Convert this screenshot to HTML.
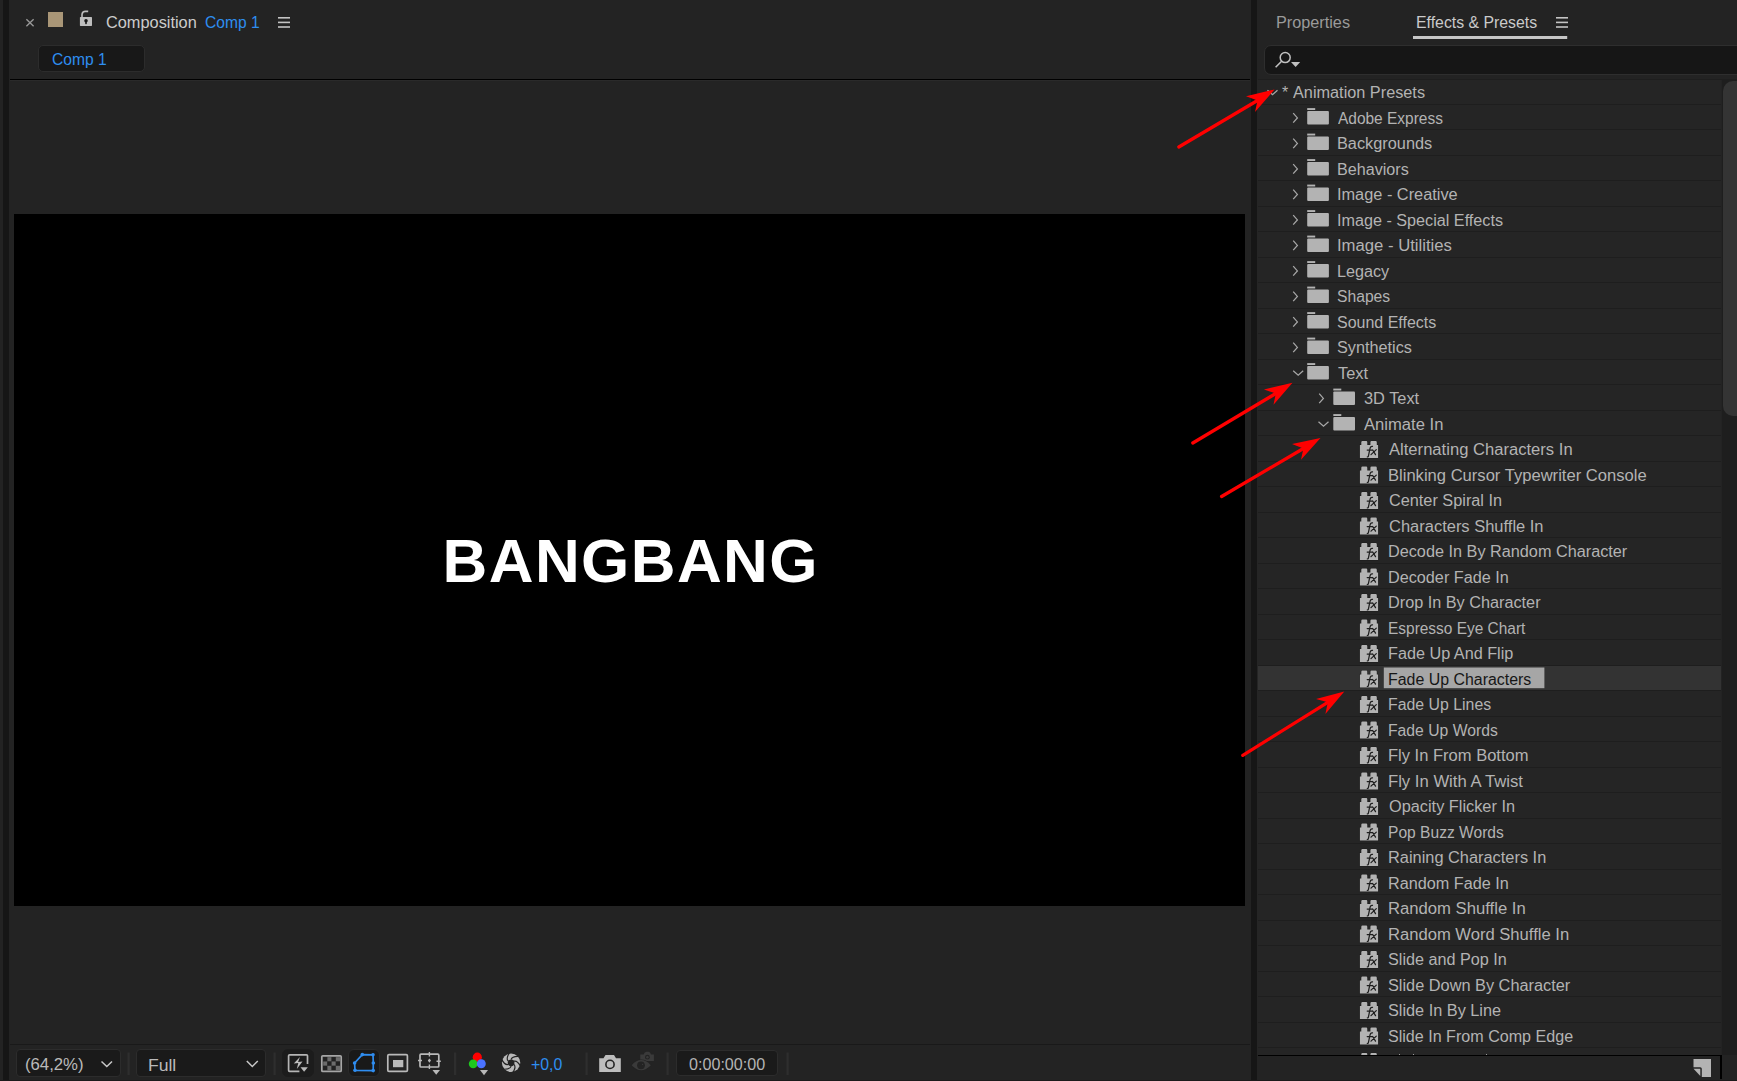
<!DOCTYPE html><html><head><meta charset="utf-8"><style>
*{margin:0;padding:0;box-sizing:border-box}
html,body{width:1737px;height:1081px;overflow:hidden;background:#232323}
body{position:relative;font-family:'Liberation Sans',sans-serif}
.a{position:absolute}
.t{position:absolute;white-space:pre;font-family:'Liberation Sans',sans-serif;font-size:16px;line-height:normal}
</style></head><body>
<div class="a" style="left:3px;top:0;width:6px;height:1081px;background:#161616"></div>
<div class="a" style="left:1251px;top:0;width:6px;height:1081px;background:#161616"></div>
<div class="a" style="left:0;top:1080px;width:1737px;height:1px;background:#1b1b1b"></div>
<svg class="a" style="left:0;top:0" width="300" height="80"><path d="M26.4 19.2 L33.6 26.2 M33.6 19.2 L26.4 26.2" stroke="#999999" stroke-width="1.35"/><rect x="48" y="12" width="15" height="15" fill="#a99677"/><path d="M82 17.5 V14.5 Q82.2 11.3 85.6 11.2 L88.2 11.4" stroke="#bdbdbd" stroke-width="1.6" fill="none"/><rect x="79.9" y="17.1" width="12.1" height="8.8" rx="0.6" fill="#bdbdbd"/><circle cx="86" cy="20.7" r="1.75" fill="#141414"/><rect x="85.2" y="21" width="1.6" height="3.3" rx="0.7" fill="#141414"/><rect x="278" y="17" width="12" height="1.6" fill="#c4c4c4"/><rect x="278" y="21.6" width="12" height="1.6" fill="#c4c4c4"/><rect x="278" y="26.2" width="12" height="1.6" fill="#c4c4c4"/></svg>
<div class="t" style="left:106.30px;top:14.20px;color:#cccccc;transform:scaleX(1.0205);transform-origin:0px 0;">Composition</div>
<div class="t" style="left:205.40px;top:14.20px;color:#2e8ef0;transform:scaleX(0.9750);transform-origin:0px 0;">Comp 1</div>
<div class="a" style="left:37.5px;top:45px;width:107px;height:27px;background:#181818;border:1.3px solid #2c2c2c;border-radius:5px"></div>
<div class="t" style="left:52.20px;top:51.10px;color:#2e8ef0;transform:scaleX(0.9768);transform-origin:0px 0;">Comp 1</div>
<div class="a" style="left:10px;top:79px;width:1240px;height:1px;background:#000"></div>
<div class="a" style="left:10px;top:80px;width:1240px;height:1px;background:#2a2a2a"></div>
<div class="a" style="left:14px;top:214px;width:1231px;height:692px;background:#000"></div>
<div class="t" style="left:442.6px;top:525.2px;color:#fff;font-weight:bold;font-size:62px;letter-spacing:1.4px">BANGBANG</div>
<div class="a" style="left:10px;top:1044px;width:1240px;height:1px;background:#191919"></div>
<div class="a" style="left:16px;top:1049px;width:105px;height:28px;background:#1a1a1a;border:1px solid #2c2c2c;border-radius:4px"></div>
<div class="t" style="left:25.30px;top:1056.20px;color:#bababa;transform:scaleX(1.0455);transform-origin:1px 0;">(64,2%)</div>
<div class="a" style="left:136px;top:1049px;width:130px;height:28px;background:#1a1a1a;border:1px solid #2c2c2c;border-radius:4px"></div>
<div class="t" style="left:147.60px;top:1057.10px;color:#bababa;transform:scaleX(1.1000);transform-origin:1px 0;">Full</div>
<div class="a" style="left:282px;top:1049px;width:32px;height:28px;background:#1c1c1c;border:1px solid #1c1c1c;border-radius:6px"></div>
<div class="a" style="left:348px;top:1049px;width:32px;height:28px;background:#191919;border:1px solid #2a2a2a;border-radius:6px"></div>
<div class="a" style="left:675.6px;top:1049.6px;width:102.60000000000002px;height:26.600000000000136px;background:#1a1a1a;border:1px solid #2c2c2c;border-radius:4px"></div>
<div class="t" style="left:688.70px;top:1055.60px;color:#b4b4b4;transform:scaleX(1.0080);transform-origin:0px 0;">0:00:00:00</div>
<div class="t" style="left:530.50px;top:1056.20px;color:#2e8ef0;transform:scaleX(0.9903);transform-origin:0px 0;">+0,0</div>
<svg class="a" style="left:0;top:1040px" width="800" height="41"><g transform="translate(0,-1040)"><rect x="127.5" y="1052.5" width="2.2" height="22.5" fill="#2e2e2e"/><rect x="273.5" y="1052.5" width="2.2" height="22.5" fill="#2e2e2e"/><rect x="454" y="1052.5" width="2.2" height="22.5" fill="#2e2e2e"/><rect x="585.5" y="1052.5" width="2.2" height="22.5" fill="#2e2e2e"/><rect x="666.5" y="1052.5" width="2.2" height="22.5" fill="#2e2e2e"/><rect x="786.5" y="1052.5" width="2.2" height="22.5" fill="#2e2e2e"/><path d="M101.5 1061.5 L106.8 1066.5 L112 1061.5" stroke="#c8c8c8" stroke-width="1.5" fill="none"/><path d="M246.8 1061 L252.3 1066.5 L257.8 1061" stroke="#c8c8c8" stroke-width="1.5" fill="none"/><path d="M299.4 1071.3 H289.6 Q288.6 1071.3 288.6 1070.3 V1055.8 Q288.6 1054.8 289.6 1054.8 H306.5 Q307.5 1054.8 307.5 1055.8 V1064" stroke="#b5b5b5" stroke-width="1.7" fill="none"/><path d="M299.9 1057 L293.8 1063.6 L298.3 1063 L296.8 1068.9 L302.5 1061.5 L298.1 1062.1 Z" fill="#bdbdbd"/><path d="M300.5 1067.2 H307.8 L304.1 1071.8 Z" fill="#bababa"/><rect x="321.8" y="1055.8" width="19.4" height="15.6" rx="1" stroke="#a6a6a6" stroke-width="1.7" fill="#2a2a2a"/><rect x="323.2" y="1057.2" width="4.2" height="4.3" fill="#222222"/><rect x="323.2" y="1061.5" width="4.2" height="4.3" fill="#6c6c6c"/><rect x="323.2" y="1065.8" width="4.2" height="4.3" fill="#222222"/><rect x="327.4" y="1057.2" width="4.2" height="4.3" fill="#6c6c6c"/><rect x="327.4" y="1061.5" width="4.2" height="4.3" fill="#222222"/><rect x="327.4" y="1065.8" width="4.2" height="4.3" fill="#6c6c6c"/><rect x="331.6" y="1057.2" width="4.2" height="4.3" fill="#222222"/><rect x="331.6" y="1061.5" width="4.2" height="4.3" fill="#6c6c6c"/><rect x="331.6" y="1065.8" width="4.2" height="4.3" fill="#222222"/><rect x="335.8" y="1057.2" width="4.2" height="4.3" fill="#6c6c6c"/><rect x="335.8" y="1061.5" width="4.2" height="4.3" fill="#222222"/><rect x="335.8" y="1065.8" width="4.2" height="4.3" fill="#6c6c6c"/><path d="M362.3 1054.6 L373 1054.8 L373.3 1063 L373.2 1070.6 L355 1070.3 L354.6 1063 Z" stroke="#2f8df0" stroke-width="1.7" fill="none"/><circle cx="362.3" cy="1054.6" r="1.8" fill="#2f8df0"/><circle cx="373" cy="1054.8" r="1.8" fill="#2f8df0"/><circle cx="373.3" cy="1063" r="1.8" fill="#2f8df0"/><circle cx="373.2" cy="1070.6" r="1.8" fill="#2f8df0"/><circle cx="355" cy="1070.3" r="1.8" fill="#2f8df0"/><circle cx="354.6" cy="1063" r="1.8" fill="#2f8df0"/><rect x="387.8" y="1054.6" width="19.6" height="16.8" rx="1.2" stroke="#b9b9b9" stroke-width="1.7" fill="none"/><rect x="393" y="1060" width="10.3" height="7.2" fill="#b9b9b9"/><rect x="420" y="1054.2" width="18.8" height="12.8" rx="1" stroke="#b9b9b9" stroke-width="1.7" fill="none"/><path d="M429.4 1052 V1056.5 M429.4 1064.5 V1069 M418 1060.5 H422 M436.5 1061.2 H440.8" stroke="#b9b9b9" stroke-width="1.4"/><path d="M429.4 1058.5 L431 1060.6 L429.4 1062.7 L427.8 1060.6 Z" fill="#b9b9b9"/><path d="M432.5 1070 H440 L436.2 1074.8 Z" fill="#b9b9b9"/><circle cx="477.3" cy="1057.2" r="4.6" fill="#ff0000"/><circle cx="473.2" cy="1063.8" r="4.4" fill="#1ec81e"/><circle cx="481.3" cy="1063.8" r="4.5" fill="#4a72ff"/><path d="M480 1070 H488 L484 1075.2 Z" fill="#b9b9b9"/><g transform="translate(511.1,1062.8)"><circle r="9.2" fill="#b9b9b9"/><circle r="3.4" fill="#232323"/><path d="M0.00 -3.30 Q0.95 -6.73 7.66 -6.43" stroke="#232323" stroke-width="1.2" fill="none"/><path d="M2.86 -1.65 Q6.30 -2.55 9.40 3.42" stroke="#232323" stroke-width="1.2" fill="none"/><path d="M2.86 1.65 Q5.36 4.19 1.74 9.85" stroke="#232323" stroke-width="1.2" fill="none"/><path d="M0.00 3.30 Q-0.95 6.73 -7.66 6.43" stroke="#232323" stroke-width="1.2" fill="none"/><path d="M-2.86 1.65 Q-6.30 2.55 -9.40 -3.42" stroke="#232323" stroke-width="1.2" fill="none"/><path d="M-2.86 -1.65 Q-5.36 -4.19 -1.74 -9.85" stroke="#232323" stroke-width="1.2" fill="none"/></g><path d="M599.2 1058.2 H603.5 L605.5 1055 H614 L616 1058.2 H620.8 V1072 H599.2 Z" fill="#bdbdbd"/><circle cx="610" cy="1064.4" r="4.1" fill="none" stroke="#232323" stroke-width="1.6"/><path d="M640.3 1054.4 H643.6 Q644.5 1051.7 646.5 1051.7 H648.5 Q650.4 1051.7 651 1054.4 H653.9 V1060.9 H640.3 Z" fill="#3a3a3a"/><circle cx="647.4" cy="1057.2" r="2.4" fill="#232323"/><circle cx="647.4" cy="1057.2" r="1.2" fill="#3a3a3a"/><path d="M631.7 1065.2 Q641.2 1055 650.8 1065.2 Q641.2 1075.4 631.7 1065.2 Z" fill="#3a3a3a" stroke="#232323" stroke-width="1.4" paint-order="stroke"/><circle cx="641" cy="1065.3" r="3.9" fill="#232323"/><circle cx="642.6" cy="1064.4" r="0.6" fill="#3a3a3a"/></g></svg>
<div class="t" style="left:1275.50px;top:14.20px;color:#9a9a9a;transform:scaleX(1.0153);transform-origin:1px 0;">Properties</div>
<div class="t" style="left:1415.70px;top:14.20px;color:#cacaca;transform:scaleX(0.9893);transform-origin:1px 0;">Effects &amp; Presets</div>
<svg class="a" style="left:1250px;top:0" width="487" height="80"><g transform="translate(-1250,0)"><rect x="1556" y="17" width="12" height="1.6" fill="#c4c4c4"/><rect x="1556" y="21.6" width="12" height="1.6" fill="#c4c4c4"/><rect x="1556" y="26.2" width="12" height="1.6" fill="#c4c4c4"/><rect x="1413" y="36" width="154.2" height="3" fill="#c6c6c6"/></g></svg>
<div class="a" style="left:1264.3px;top:45px;width:490px;height:29.8px;background:#161616;border:1.3px solid #2e2e2e;border-radius:7px"></div>
<svg class="a" style="left:1270px;top:48px" width="40" height="24"><g transform="translate(-1270,-48)"><circle cx="1285.2" cy="57.6" r="5" stroke="#c0c0c0" stroke-width="1.5" fill="none"/><path d="M1281.6 61.2 L1275.6 67.2" stroke="#c0c0c0" stroke-width="1.6"/><path d="M1291 62 H1300.2 L1295.6 66.9 Z" fill="#c0c0c0"/></g></svg>
<div class="a" style="left:1258px;top:79px;width:479px;height:1px;background:#1e1e1e"></div>
<div class="a" style="left:1257px;top:80px;width:464px;height:975px;overflow:hidden;background:#252525">
<svg class="a" style="left:0;top:0" width="464" height="975"><g transform="translate(-1257,-80)"><path d="M1267.5 90.2 L1272.5 94.6 L1277.5 90.2" stroke="#a8a8a8" stroke-width="1.25" fill="none"/><rect x="1258" y="104" width="463" height="1" fill="#1e1e1e"/><path d="M1293.2 113.1 L1297.4 117.9 L1293.2 122.7" stroke="#a8a8a8" stroke-width="1.25" fill="none"/><rect x="1307.2" y="108.1" width="8" height="1.9" fill="#b3b3b3"/><rect x="1307.2" y="111.0" width="21.7" height="13.6" rx="1" fill="#b3b3b3"/><rect x="1258" y="129" width="463" height="1" fill="#1e1e1e"/><path d="M1293.2 138.6 L1297.4 143.4 L1293.2 148.2" stroke="#a8a8a8" stroke-width="1.25" fill="none"/><rect x="1307.2" y="133.6" width="8" height="1.9" fill="#b3b3b3"/><rect x="1307.2" y="136.5" width="21.7" height="13.6" rx="1" fill="#b3b3b3"/><rect x="1258" y="155" width="463" height="1" fill="#1e1e1e"/><path d="M1293.2 164.1 L1297.4 168.9 L1293.2 173.7" stroke="#a8a8a8" stroke-width="1.25" fill="none"/><rect x="1307.2" y="159.1" width="8" height="1.9" fill="#b3b3b3"/><rect x="1307.2" y="162.0" width="21.7" height="13.6" rx="1" fill="#b3b3b3"/><rect x="1258" y="180" width="463" height="1" fill="#1e1e1e"/><path d="M1293.2 189.6 L1297.4 194.4 L1293.2 199.2" stroke="#a8a8a8" stroke-width="1.25" fill="none"/><rect x="1307.2" y="184.6" width="8" height="1.9" fill="#b3b3b3"/><rect x="1307.2" y="187.5" width="21.7" height="13.6" rx="1" fill="#b3b3b3"/><rect x="1258" y="206" width="463" height="1" fill="#1e1e1e"/><path d="M1293.2 215.1 L1297.4 219.9 L1293.2 224.7" stroke="#a8a8a8" stroke-width="1.25" fill="none"/><rect x="1307.2" y="210.1" width="8" height="1.9" fill="#b3b3b3"/><rect x="1307.2" y="213.0" width="21.7" height="13.6" rx="1" fill="#b3b3b3"/><rect x="1258" y="231" width="463" height="1" fill="#1e1e1e"/><path d="M1293.2 240.6 L1297.4 245.4 L1293.2 250.2" stroke="#a8a8a8" stroke-width="1.25" fill="none"/><rect x="1307.2" y="235.6" width="8" height="1.9" fill="#b3b3b3"/><rect x="1307.2" y="238.5" width="21.7" height="13.6" rx="1" fill="#b3b3b3"/><rect x="1258" y="257" width="463" height="1" fill="#1e1e1e"/><path d="M1293.2 266.1 L1297.4 270.9 L1293.2 275.7" stroke="#a8a8a8" stroke-width="1.25" fill="none"/><rect x="1307.2" y="261.1" width="8" height="1.9" fill="#b3b3b3"/><rect x="1307.2" y="264.0" width="21.7" height="13.6" rx="1" fill="#b3b3b3"/><rect x="1258" y="282" width="463" height="1" fill="#1e1e1e"/><path d="M1293.2 291.6 L1297.4 296.4 L1293.2 301.2" stroke="#a8a8a8" stroke-width="1.25" fill="none"/><rect x="1307.2" y="286.6" width="8" height="1.9" fill="#b3b3b3"/><rect x="1307.2" y="289.5" width="21.7" height="13.6" rx="1" fill="#b3b3b3"/><rect x="1258" y="308" width="463" height="1" fill="#1e1e1e"/><path d="M1293.2 317.1 L1297.4 321.9 L1293.2 326.7" stroke="#a8a8a8" stroke-width="1.25" fill="none"/><rect x="1307.2" y="312.1" width="8" height="1.9" fill="#b3b3b3"/><rect x="1307.2" y="315.0" width="21.7" height="13.6" rx="1" fill="#b3b3b3"/><rect x="1258" y="333" width="463" height="1" fill="#1e1e1e"/><path d="M1293.2 342.6 L1297.4 347.4 L1293.2 352.2" stroke="#a8a8a8" stroke-width="1.25" fill="none"/><rect x="1307.2" y="337.6" width="8" height="1.9" fill="#b3b3b3"/><rect x="1307.2" y="340.5" width="21.7" height="13.6" rx="1" fill="#b3b3b3"/><rect x="1258" y="359" width="463" height="1" fill="#1e1e1e"/><path d="M1293.2 370.7 L1298.2 375.1 L1303.2 370.7" stroke="#a8a8a8" stroke-width="1.25" fill="none"/><rect x="1307.2" y="363.1" width="8" height="1.9" fill="#b3b3b3"/><rect x="1307.2" y="366.0" width="21.7" height="13.6" rx="1" fill="#b3b3b3"/><rect x="1258" y="384" width="463" height="1" fill="#1e1e1e"/><path d="M1319.2 393.6 L1323.4 398.4 L1319.2 403.2" stroke="#a8a8a8" stroke-width="1.25" fill="none"/><rect x="1333.3" y="388.6" width="8" height="1.9" fill="#b3b3b3"/><rect x="1333.3" y="391.5" width="21.7" height="13.6" rx="1" fill="#b3b3b3"/><rect x="1258" y="410" width="463" height="1" fill="#1e1e1e"/><path d="M1318.5 421.7 L1323.5 426.1 L1328.5 421.7" stroke="#a8a8a8" stroke-width="1.25" fill="none"/><rect x="1333.3" y="414.1" width="8" height="1.9" fill="#b3b3b3"/><rect x="1333.3" y="417.0" width="21.7" height="13.6" rx="1" fill="#b3b3b3"/><rect x="1258" y="435" width="463" height="1" fill="#1e1e1e"/><path d="M1359.9 444.9 H1361.3 V442.2 Q1361.3 441.1 1362.4 441.1 H1366.2 Q1367.3 441.1 1367.3 442.2 V444.9 H1370.4 V442.2 Q1370.4 441.1 1371.5 441.1 H1375.7 Q1376.8 441.1 1376.8 442.2 V444.9 H1378.1 V458.0 H1359.9 Z" fill="#b3b3b3" stroke="#1c1c1c" stroke-width="1" paint-order="stroke"/><path transform="translate(1359.9,436.0)" d="M12.6 10.4 Q10.7 9.9 10 12.8 L8.5 20.2 Q8.2 21 7.4 20.8 M7.3 14.1 H12.3 M11.1 18.6 L16.4 13.6 M12.8 14 L15.6 18.6" stroke="#1e1e1e" stroke-width="1.25" fill="none" stroke-linecap="round"/><rect x="1258" y="461" width="463" height="1" fill="#1e1e1e"/><path d="M1359.9 470.4 H1361.3 V467.7 Q1361.3 466.6 1362.4 466.6 H1366.2 Q1367.3 466.6 1367.3 467.7 V470.4 H1370.4 V467.7 Q1370.4 466.6 1371.5 466.6 H1375.7 Q1376.8 466.6 1376.8 467.7 V470.4 H1378.1 V483.5 H1359.9 Z" fill="#b3b3b3" stroke="#1c1c1c" stroke-width="1" paint-order="stroke"/><path transform="translate(1359.9,461.5)" d="M12.6 10.4 Q10.7 9.9 10 12.8 L8.5 20.2 Q8.2 21 7.4 20.8 M7.3 14.1 H12.3 M11.1 18.6 L16.4 13.6 M12.8 14 L15.6 18.6" stroke="#1e1e1e" stroke-width="1.25" fill="none" stroke-linecap="round"/><rect x="1258" y="486" width="463" height="1" fill="#1e1e1e"/><path d="M1359.9 495.9 H1361.3 V493.2 Q1361.3 492.1 1362.4 492.1 H1366.2 Q1367.3 492.1 1367.3 493.2 V495.9 H1370.4 V493.2 Q1370.4 492.1 1371.5 492.1 H1375.7 Q1376.8 492.1 1376.8 493.2 V495.9 H1378.1 V509.0 H1359.9 Z" fill="#b3b3b3" stroke="#1c1c1c" stroke-width="1" paint-order="stroke"/><path transform="translate(1359.9,487.0)" d="M12.6 10.4 Q10.7 9.9 10 12.8 L8.5 20.2 Q8.2 21 7.4 20.8 M7.3 14.1 H12.3 M11.1 18.6 L16.4 13.6 M12.8 14 L15.6 18.6" stroke="#1e1e1e" stroke-width="1.25" fill="none" stroke-linecap="round"/><rect x="1258" y="512" width="463" height="1" fill="#1e1e1e"/><path d="M1359.9 521.4 H1361.3 V518.7 Q1361.3 517.6 1362.4 517.6 H1366.2 Q1367.3 517.6 1367.3 518.7 V521.4 H1370.4 V518.7 Q1370.4 517.6 1371.5 517.6 H1375.7 Q1376.8 517.6 1376.8 518.7 V521.4 H1378.1 V534.5 H1359.9 Z" fill="#b3b3b3" stroke="#1c1c1c" stroke-width="1" paint-order="stroke"/><path transform="translate(1359.9,512.5)" d="M12.6 10.4 Q10.7 9.9 10 12.8 L8.5 20.2 Q8.2 21 7.4 20.8 M7.3 14.1 H12.3 M11.1 18.6 L16.4 13.6 M12.8 14 L15.6 18.6" stroke="#1e1e1e" stroke-width="1.25" fill="none" stroke-linecap="round"/><rect x="1258" y="537" width="463" height="1" fill="#1e1e1e"/><path d="M1359.9 546.9 H1361.3 V544.2 Q1361.3 543.1 1362.4 543.1 H1366.2 Q1367.3 543.1 1367.3 544.2 V546.9 H1370.4 V544.2 Q1370.4 543.1 1371.5 543.1 H1375.7 Q1376.8 543.1 1376.8 544.2 V546.9 H1378.1 V560.0 H1359.9 Z" fill="#b3b3b3" stroke="#1c1c1c" stroke-width="1" paint-order="stroke"/><path transform="translate(1359.9,538.0)" d="M12.6 10.4 Q10.7 9.9 10 12.8 L8.5 20.2 Q8.2 21 7.4 20.8 M7.3 14.1 H12.3 M11.1 18.6 L16.4 13.6 M12.8 14 L15.6 18.6" stroke="#1e1e1e" stroke-width="1.25" fill="none" stroke-linecap="round"/><rect x="1258" y="563" width="463" height="1" fill="#1e1e1e"/><path d="M1359.9 572.4 H1361.3 V569.7 Q1361.3 568.6 1362.4 568.6 H1366.2 Q1367.3 568.6 1367.3 569.7 V572.4 H1370.4 V569.7 Q1370.4 568.6 1371.5 568.6 H1375.7 Q1376.8 568.6 1376.8 569.7 V572.4 H1378.1 V585.5 H1359.9 Z" fill="#b3b3b3" stroke="#1c1c1c" stroke-width="1" paint-order="stroke"/><path transform="translate(1359.9,563.5)" d="M12.6 10.4 Q10.7 9.9 10 12.8 L8.5 20.2 Q8.2 21 7.4 20.8 M7.3 14.1 H12.3 M11.1 18.6 L16.4 13.6 M12.8 14 L15.6 18.6" stroke="#1e1e1e" stroke-width="1.25" fill="none" stroke-linecap="round"/><rect x="1258" y="588" width="463" height="1" fill="#1e1e1e"/><path d="M1359.9 597.9 H1361.3 V595.2 Q1361.3 594.1 1362.4 594.1 H1366.2 Q1367.3 594.1 1367.3 595.2 V597.9 H1370.4 V595.2 Q1370.4 594.1 1371.5 594.1 H1375.7 Q1376.8 594.1 1376.8 595.2 V597.9 H1378.1 V611.0 H1359.9 Z" fill="#b3b3b3" stroke="#1c1c1c" stroke-width="1" paint-order="stroke"/><path transform="translate(1359.9,589.0)" d="M12.6 10.4 Q10.7 9.9 10 12.8 L8.5 20.2 Q8.2 21 7.4 20.8 M7.3 14.1 H12.3 M11.1 18.6 L16.4 13.6 M12.8 14 L15.6 18.6" stroke="#1e1e1e" stroke-width="1.25" fill="none" stroke-linecap="round"/><rect x="1258" y="614" width="463" height="1" fill="#1e1e1e"/><path d="M1359.9 623.4 H1361.3 V620.7 Q1361.3 619.6 1362.4 619.6 H1366.2 Q1367.3 619.6 1367.3 620.7 V623.4 H1370.4 V620.7 Q1370.4 619.6 1371.5 619.6 H1375.7 Q1376.8 619.6 1376.8 620.7 V623.4 H1378.1 V636.5 H1359.9 Z" fill="#b3b3b3" stroke="#1c1c1c" stroke-width="1" paint-order="stroke"/><path transform="translate(1359.9,614.5)" d="M12.6 10.4 Q10.7 9.9 10 12.8 L8.5 20.2 Q8.2 21 7.4 20.8 M7.3 14.1 H12.3 M11.1 18.6 L16.4 13.6 M12.8 14 L15.6 18.6" stroke="#1e1e1e" stroke-width="1.25" fill="none" stroke-linecap="round"/><rect x="1258" y="639" width="463" height="1" fill="#1e1e1e"/><path d="M1359.9 648.9 H1361.3 V646.2 Q1361.3 645.1 1362.4 645.1 H1366.2 Q1367.3 645.1 1367.3 646.2 V648.9 H1370.4 V646.2 Q1370.4 645.1 1371.5 645.1 H1375.7 Q1376.8 645.1 1376.8 646.2 V648.9 H1378.1 V662.0 H1359.9 Z" fill="#b3b3b3" stroke="#1c1c1c" stroke-width="1" paint-order="stroke"/><path transform="translate(1359.9,640.0)" d="M12.6 10.4 Q10.7 9.9 10 12.8 L8.5 20.2 Q8.2 21 7.4 20.8 M7.3 14.1 H12.3 M11.1 18.6 L16.4 13.6 M12.8 14 L15.6 18.6" stroke="#1e1e1e" stroke-width="1.25" fill="none" stroke-linecap="round"/><rect x="1258" y="665" width="463" height="1" fill="#1e1e1e"/><rect x="1258" y="666.0" width="463" height="25" fill="#333333"/><path d="M1359.9 674.4 H1361.3 V671.7 Q1361.3 670.6 1362.4 670.6 H1366.2 Q1367.3 670.6 1367.3 671.7 V674.4 H1370.4 V671.7 Q1370.4 670.6 1371.5 670.6 H1375.7 Q1376.8 670.6 1376.8 671.7 V674.4 H1378.1 V687.5 H1359.9 Z" fill="#b3b3b3" stroke="#1c1c1c" stroke-width="1" paint-order="stroke"/><path transform="translate(1359.9,665.5)" d="M12.6 10.4 Q10.7 9.9 10 12.8 L8.5 20.2 Q8.2 21 7.4 20.8 M7.3 14.1 H12.3 M11.1 18.6 L16.4 13.6 M12.8 14 L15.6 18.6" stroke="#1e1e1e" stroke-width="1.25" fill="none" stroke-linecap="round"/><rect x="1383.8" y="667.5" width="160.6" height="20.7" fill="#a6a6a6"/><rect x="1258" y="690" width="463" height="1" fill="#1e1e1e"/><path d="M1359.9 699.9 H1361.3 V697.2 Q1361.3 696.1 1362.4 696.1 H1366.2 Q1367.3 696.1 1367.3 697.2 V699.9 H1370.4 V697.2 Q1370.4 696.1 1371.5 696.1 H1375.7 Q1376.8 696.1 1376.8 697.2 V699.9 H1378.1 V713.0 H1359.9 Z" fill="#b3b3b3" stroke="#1c1c1c" stroke-width="1" paint-order="stroke"/><path transform="translate(1359.9,691.0)" d="M12.6 10.4 Q10.7 9.9 10 12.8 L8.5 20.2 Q8.2 21 7.4 20.8 M7.3 14.1 H12.3 M11.1 18.6 L16.4 13.6 M12.8 14 L15.6 18.6" stroke="#1e1e1e" stroke-width="1.25" fill="none" stroke-linecap="round"/><rect x="1258" y="716" width="463" height="1" fill="#1e1e1e"/><path d="M1359.9 725.4 H1361.3 V722.7 Q1361.3 721.6 1362.4 721.6 H1366.2 Q1367.3 721.6 1367.3 722.7 V725.4 H1370.4 V722.7 Q1370.4 721.6 1371.5 721.6 H1375.7 Q1376.8 721.6 1376.8 722.7 V725.4 H1378.1 V738.5 H1359.9 Z" fill="#b3b3b3" stroke="#1c1c1c" stroke-width="1" paint-order="stroke"/><path transform="translate(1359.9,716.5)" d="M12.6 10.4 Q10.7 9.9 10 12.8 L8.5 20.2 Q8.2 21 7.4 20.8 M7.3 14.1 H12.3 M11.1 18.6 L16.4 13.6 M12.8 14 L15.6 18.6" stroke="#1e1e1e" stroke-width="1.25" fill="none" stroke-linecap="round"/><rect x="1258" y="741" width="463" height="1" fill="#1e1e1e"/><path d="M1359.9 750.9 H1361.3 V748.2 Q1361.3 747.1 1362.4 747.1 H1366.2 Q1367.3 747.1 1367.3 748.2 V750.9 H1370.4 V748.2 Q1370.4 747.1 1371.5 747.1 H1375.7 Q1376.8 747.1 1376.8 748.2 V750.9 H1378.1 V764.0 H1359.9 Z" fill="#b3b3b3" stroke="#1c1c1c" stroke-width="1" paint-order="stroke"/><path transform="translate(1359.9,742.0)" d="M12.6 10.4 Q10.7 9.9 10 12.8 L8.5 20.2 Q8.2 21 7.4 20.8 M7.3 14.1 H12.3 M11.1 18.6 L16.4 13.6 M12.8 14 L15.6 18.6" stroke="#1e1e1e" stroke-width="1.25" fill="none" stroke-linecap="round"/><rect x="1258" y="767" width="463" height="1" fill="#1e1e1e"/><path d="M1359.9 776.4 H1361.3 V773.7 Q1361.3 772.6 1362.4 772.6 H1366.2 Q1367.3 772.6 1367.3 773.7 V776.4 H1370.4 V773.7 Q1370.4 772.6 1371.5 772.6 H1375.7 Q1376.8 772.6 1376.8 773.7 V776.4 H1378.1 V789.5 H1359.9 Z" fill="#b3b3b3" stroke="#1c1c1c" stroke-width="1" paint-order="stroke"/><path transform="translate(1359.9,767.5)" d="M12.6 10.4 Q10.7 9.9 10 12.8 L8.5 20.2 Q8.2 21 7.4 20.8 M7.3 14.1 H12.3 M11.1 18.6 L16.4 13.6 M12.8 14 L15.6 18.6" stroke="#1e1e1e" stroke-width="1.25" fill="none" stroke-linecap="round"/><rect x="1258" y="792" width="463" height="1" fill="#1e1e1e"/><path d="M1359.9 801.9 H1361.3 V799.2 Q1361.3 798.1 1362.4 798.1 H1366.2 Q1367.3 798.1 1367.3 799.2 V801.9 H1370.4 V799.2 Q1370.4 798.1 1371.5 798.1 H1375.7 Q1376.8 798.1 1376.8 799.2 V801.9 H1378.1 V815.0 H1359.9 Z" fill="#b3b3b3" stroke="#1c1c1c" stroke-width="1" paint-order="stroke"/><path transform="translate(1359.9,793.0)" d="M12.6 10.4 Q10.7 9.9 10 12.8 L8.5 20.2 Q8.2 21 7.4 20.8 M7.3 14.1 H12.3 M11.1 18.6 L16.4 13.6 M12.8 14 L15.6 18.6" stroke="#1e1e1e" stroke-width="1.25" fill="none" stroke-linecap="round"/><rect x="1258" y="818" width="463" height="1" fill="#1e1e1e"/><path d="M1359.9 827.4 H1361.3 V824.7 Q1361.3 823.6 1362.4 823.6 H1366.2 Q1367.3 823.6 1367.3 824.7 V827.4 H1370.4 V824.7 Q1370.4 823.6 1371.5 823.6 H1375.7 Q1376.8 823.6 1376.8 824.7 V827.4 H1378.1 V840.5 H1359.9 Z" fill="#b3b3b3" stroke="#1c1c1c" stroke-width="1" paint-order="stroke"/><path transform="translate(1359.9,818.5)" d="M12.6 10.4 Q10.7 9.9 10 12.8 L8.5 20.2 Q8.2 21 7.4 20.8 M7.3 14.1 H12.3 M11.1 18.6 L16.4 13.6 M12.8 14 L15.6 18.6" stroke="#1e1e1e" stroke-width="1.25" fill="none" stroke-linecap="round"/><rect x="1258" y="843" width="463" height="1" fill="#1e1e1e"/><path d="M1359.9 852.9 H1361.3 V850.2 Q1361.3 849.1 1362.4 849.1 H1366.2 Q1367.3 849.1 1367.3 850.2 V852.9 H1370.4 V850.2 Q1370.4 849.1 1371.5 849.1 H1375.7 Q1376.8 849.1 1376.8 850.2 V852.9 H1378.1 V866.0 H1359.9 Z" fill="#b3b3b3" stroke="#1c1c1c" stroke-width="1" paint-order="stroke"/><path transform="translate(1359.9,844.0)" d="M12.6 10.4 Q10.7 9.9 10 12.8 L8.5 20.2 Q8.2 21 7.4 20.8 M7.3 14.1 H12.3 M11.1 18.6 L16.4 13.6 M12.8 14 L15.6 18.6" stroke="#1e1e1e" stroke-width="1.25" fill="none" stroke-linecap="round"/><rect x="1258" y="869" width="463" height="1" fill="#1e1e1e"/><path d="M1359.9 878.4 H1361.3 V875.7 Q1361.3 874.6 1362.4 874.6 H1366.2 Q1367.3 874.6 1367.3 875.7 V878.4 H1370.4 V875.7 Q1370.4 874.6 1371.5 874.6 H1375.7 Q1376.8 874.6 1376.8 875.7 V878.4 H1378.1 V891.5 H1359.9 Z" fill="#b3b3b3" stroke="#1c1c1c" stroke-width="1" paint-order="stroke"/><path transform="translate(1359.9,869.5)" d="M12.6 10.4 Q10.7 9.9 10 12.8 L8.5 20.2 Q8.2 21 7.4 20.8 M7.3 14.1 H12.3 M11.1 18.6 L16.4 13.6 M12.8 14 L15.6 18.6" stroke="#1e1e1e" stroke-width="1.25" fill="none" stroke-linecap="round"/><rect x="1258" y="894" width="463" height="1" fill="#1e1e1e"/><path d="M1359.9 903.9 H1361.3 V901.2 Q1361.3 900.1 1362.4 900.1 H1366.2 Q1367.3 900.1 1367.3 901.2 V903.9 H1370.4 V901.2 Q1370.4 900.1 1371.5 900.1 H1375.7 Q1376.8 900.1 1376.8 901.2 V903.9 H1378.1 V917.0 H1359.9 Z" fill="#b3b3b3" stroke="#1c1c1c" stroke-width="1" paint-order="stroke"/><path transform="translate(1359.9,895.0)" d="M12.6 10.4 Q10.7 9.9 10 12.8 L8.5 20.2 Q8.2 21 7.4 20.8 M7.3 14.1 H12.3 M11.1 18.6 L16.4 13.6 M12.8 14 L15.6 18.6" stroke="#1e1e1e" stroke-width="1.25" fill="none" stroke-linecap="round"/><rect x="1258" y="920" width="463" height="1" fill="#1e1e1e"/><path d="M1359.9 929.4 H1361.3 V926.7 Q1361.3 925.6 1362.4 925.6 H1366.2 Q1367.3 925.6 1367.3 926.7 V929.4 H1370.4 V926.7 Q1370.4 925.6 1371.5 925.6 H1375.7 Q1376.8 925.6 1376.8 926.7 V929.4 H1378.1 V942.5 H1359.9 Z" fill="#b3b3b3" stroke="#1c1c1c" stroke-width="1" paint-order="stroke"/><path transform="translate(1359.9,920.5)" d="M12.6 10.4 Q10.7 9.9 10 12.8 L8.5 20.2 Q8.2 21 7.4 20.8 M7.3 14.1 H12.3 M11.1 18.6 L16.4 13.6 M12.8 14 L15.6 18.6" stroke="#1e1e1e" stroke-width="1.25" fill="none" stroke-linecap="round"/><rect x="1258" y="945" width="463" height="1" fill="#1e1e1e"/><path d="M1359.9 954.9 H1361.3 V952.2 Q1361.3 951.1 1362.4 951.1 H1366.2 Q1367.3 951.1 1367.3 952.2 V954.9 H1370.4 V952.2 Q1370.4 951.1 1371.5 951.1 H1375.7 Q1376.8 951.1 1376.8 952.2 V954.9 H1378.1 V968.0 H1359.9 Z" fill="#b3b3b3" stroke="#1c1c1c" stroke-width="1" paint-order="stroke"/><path transform="translate(1359.9,946.0)" d="M12.6 10.4 Q10.7 9.9 10 12.8 L8.5 20.2 Q8.2 21 7.4 20.8 M7.3 14.1 H12.3 M11.1 18.6 L16.4 13.6 M12.8 14 L15.6 18.6" stroke="#1e1e1e" stroke-width="1.25" fill="none" stroke-linecap="round"/><rect x="1258" y="971" width="463" height="1" fill="#1e1e1e"/><path d="M1359.9 980.4 H1361.3 V977.7 Q1361.3 976.6 1362.4 976.6 H1366.2 Q1367.3 976.6 1367.3 977.7 V980.4 H1370.4 V977.7 Q1370.4 976.6 1371.5 976.6 H1375.7 Q1376.8 976.6 1376.8 977.7 V980.4 H1378.1 V993.5 H1359.9 Z" fill="#b3b3b3" stroke="#1c1c1c" stroke-width="1" paint-order="stroke"/><path transform="translate(1359.9,971.5)" d="M12.6 10.4 Q10.7 9.9 10 12.8 L8.5 20.2 Q8.2 21 7.4 20.8 M7.3 14.1 H12.3 M11.1 18.6 L16.4 13.6 M12.8 14 L15.6 18.6" stroke="#1e1e1e" stroke-width="1.25" fill="none" stroke-linecap="round"/><rect x="1258" y="996" width="463" height="1" fill="#1e1e1e"/><path d="M1359.9 1005.9 H1361.3 V1003.2 Q1361.3 1002.1 1362.4 1002.1 H1366.2 Q1367.3 1002.1 1367.3 1003.2 V1005.9 H1370.4 V1003.2 Q1370.4 1002.1 1371.5 1002.1 H1375.7 Q1376.8 1002.1 1376.8 1003.2 V1005.9 H1378.1 V1019.0 H1359.9 Z" fill="#b3b3b3" stroke="#1c1c1c" stroke-width="1" paint-order="stroke"/><path transform="translate(1359.9,997.0)" d="M12.6 10.4 Q10.7 9.9 10 12.8 L8.5 20.2 Q8.2 21 7.4 20.8 M7.3 14.1 H12.3 M11.1 18.6 L16.4 13.6 M12.8 14 L15.6 18.6" stroke="#1e1e1e" stroke-width="1.25" fill="none" stroke-linecap="round"/><rect x="1258" y="1022" width="463" height="1" fill="#1e1e1e"/><path d="M1359.9 1031.4 H1361.3 V1028.7 Q1361.3 1027.6 1362.4 1027.6 H1366.2 Q1367.3 1027.6 1367.3 1028.7 V1031.4 H1370.4 V1028.7 Q1370.4 1027.6 1371.5 1027.6 H1375.7 Q1376.8 1027.6 1376.8 1028.7 V1031.4 H1378.1 V1044.5 H1359.9 Z" fill="#b3b3b3" stroke="#1c1c1c" stroke-width="1" paint-order="stroke"/><path transform="translate(1359.9,1022.5)" d="M12.6 10.4 Q10.7 9.9 10 12.8 L8.5 20.2 Q8.2 21 7.4 20.8 M7.3 14.1 H12.3 M11.1 18.6 L16.4 13.6 M12.8 14 L15.6 18.6" stroke="#1e1e1e" stroke-width="1.25" fill="none" stroke-linecap="round"/><rect x="1258" y="1047" width="463" height="1" fill="#1e1e1e"/><path d="M1359.9 1056.9 H1361.3 V1054.2 Q1361.3 1053.1 1362.4 1053.1 H1366.2 Q1367.3 1053.1 1367.3 1054.2 V1056.9 H1370.4 V1054.2 Q1370.4 1053.1 1371.5 1053.1 H1375.7 Q1376.8 1053.1 1376.8 1054.2 V1056.9 H1378.1 V1070.0 H1359.9 Z" fill="#b3b3b3" stroke="#1c1c1c" stroke-width="1" paint-order="stroke"/><path transform="translate(1359.9,1048.0)" d="M12.6 10.4 Q10.7 9.9 10 12.8 L8.5 20.2 Q8.2 21 7.4 20.8 M7.3 14.1 H12.3 M11.1 18.6 L16.4 13.6 M12.8 14 L15.6 18.6" stroke="#1e1e1e" stroke-width="1.25" fill="none" stroke-linecap="round"/></g></svg>
<div class="t" style="left:25.00px;top:4.30px;color:#b3b3b3;">*</div>
<div class="t" style="left:36.20px;top:4.30px;color:#b3b3b3;transform:scaleX(1.0169);transform-origin:0px 0;">Animation Presets</div>
<div class="t" style="left:80.50px;top:29.80px;color:#b3b3b3;transform:scaleX(0.9667);transform-origin:0px 0;">Adobe Express</div>
<div class="t" style="left:79.50px;top:55.30px;color:#b3b3b3;transform:scaleX(1.0196);transform-origin:1px 0;">Backgrounds</div>
<div class="t" style="left:79.50px;top:80.80px;color:#b3b3b3;transform:scaleX(1.0086);transform-origin:1px 0;">Behaviors</div>
<div class="t" style="left:79.50px;top:106.30px;color:#b3b3b3;transform:scaleX(1.0205);transform-origin:1px 0;">Image - Creative</div>
<div class="t" style="left:79.50px;top:131.80px;color:#b3b3b3;transform:scaleX(1.0110);transform-origin:1px 0;">Image - Special Effects</div>
<div class="t" style="left:79.50px;top:157.30px;color:#b3b3b3;transform:scaleX(1.0431);transform-origin:1px 0;">Image - Utilities</div>
<div class="t" style="left:79.50px;top:182.80px;color:#b3b3b3;transform:scaleX(1.0118);transform-origin:1px 0;">Legacy</div>
<div class="t" style="left:79.50px;top:208.30px;color:#b3b3b3;transform:scaleX(0.9792);transform-origin:1px 0;">Shapes</div>
<div class="t" style="left:79.50px;top:233.80px;color:#b3b3b3;transform:scaleX(0.9990);transform-origin:1px 0;">Sound Effects</div>
<div class="t" style="left:79.50px;top:259.30px;color:#b3b3b3;transform:scaleX(1.0151);transform-origin:1px 0;">Synthetics</div>
<div class="t" style="left:80.50px;top:284.80px;color:#b3b3b3;transform:scaleX(1.0267);transform-origin:0px 0;">Text</div>
<div class="t" style="left:106.80px;top:310.30px;color:#b3b3b3;transform:scaleX(1.0222);transform-origin:0px 0;">3D Text</div>
<div class="t" style="left:106.80px;top:335.80px;color:#b3b3b3;transform:scaleX(1.0382);transform-origin:0px 0;">Animate In</div>
<div class="t" style="left:131.80px;top:361.30px;color:#b3b3b3;transform:scaleX(1.0375);transform-origin:0px 0;">Alternating Characters In</div>
<div class="t" style="left:130.80px;top:386.80px;color:#b3b3b3;transform:scaleX(1.0363);transform-origin:1px 0;">Blinking Cursor Typewriter Console</div>
<div class="t" style="left:131.80px;top:412.30px;color:#b3b3b3;transform:scaleX(1.0171);transform-origin:0px 0;">Center Spiral In</div>
<div class="t" style="left:131.80px;top:437.80px;color:#b3b3b3;transform:scaleX(1.0302);transform-origin:0px 0;">Characters Shuffle In</div>
<div class="t" style="left:130.80px;top:463.30px;color:#b3b3b3;transform:scaleX(1.0153);transform-origin:1px 0;">Decode In By Random Character</div>
<div class="t" style="left:130.80px;top:488.80px;color:#b3b3b3;transform:scaleX(1.0136);transform-origin:1px 0;">Decoder Fade In</div>
<div class="t" style="left:130.80px;top:514.30px;color:#b3b3b3;transform:scaleX(1.0153);transform-origin:1px 0;">Drop In By Character</div>
<div class="t" style="left:130.80px;top:539.80px;color:#b3b3b3;transform:scaleX(0.9648);transform-origin:1px 0;">Espresso Eye Chart</div>
<div class="t" style="left:130.80px;top:565.30px;color:#b3b3b3;transform:scaleX(1.0139);transform-origin:1px 0;">Fade Up And Flip</div>
<div class="t" style="left:130.80px;top:590.80px;color:#161616;transform:scaleX(0.9944);transform-origin:1px 0;">Fade Up Characters</div>
<div class="t" style="left:130.80px;top:616.30px;color:#b3b3b3;transform:scaleX(0.9913);transform-origin:1px 0;">Fade Up Lines</div>
<div class="t" style="left:130.80px;top:641.80px;color:#b3b3b3;transform:scaleX(0.9829);transform-origin:1px 0;">Fade Up Words</div>
<div class="t" style="left:130.80px;top:667.30px;color:#b3b3b3;transform:scaleX(1.0333);transform-origin:1px 0;">Fly In From Bottom</div>
<div class="t" style="left:130.80px;top:692.80px;color:#b3b3b3;transform:scaleX(1.0426);transform-origin:1px 0;">Fly In With A Twist</div>
<div class="t" style="left:131.80px;top:718.30px;color:#b3b3b3;transform:scaleX(1.0195);transform-origin:0px 0;">Opacity Flicker In</div>
<div class="t" style="left:130.80px;top:743.80px;color:#b3b3b3;transform:scaleX(0.9737);transform-origin:1px 0;">Pop Buzz Words</div>
<div class="t" style="left:130.80px;top:769.30px;color:#b3b3b3;transform:scaleX(1.0229);transform-origin:1px 0;">Raining Characters In</div>
<div class="t" style="left:130.80px;top:794.80px;color:#b3b3b3;transform:scaleX(1.0136);transform-origin:1px 0;">Random Fade In</div>
<div class="t" style="left:130.80px;top:820.30px;color:#b3b3b3;transform:scaleX(1.0420);transform-origin:1px 0;">Random Shuffle In</div>
<div class="t" style="left:130.80px;top:845.80px;color:#b3b3b3;transform:scaleX(1.0376);transform-origin:1px 0;">Random Word Shuffle In</div>
<div class="t" style="left:130.80px;top:871.30px;color:#b3b3b3;transform:scaleX(1.0121);transform-origin:1px 0;">Slide and Pop In</div>
<div class="t" style="left:130.80px;top:896.80px;color:#b3b3b3;transform:scaleX(1.0197);transform-origin:1px 0;">Slide Down By Character</div>
<div class="t" style="left:130.80px;top:922.30px;color:#b3b3b3;transform:scaleX(1.0173);transform-origin:1px 0;">Slide In By Line</div>
<div class="t" style="left:130.80px;top:947.80px;color:#b3b3b3;transform:scaleX(1.0055);transform-origin:1px 0;">Slide In From Comp Edge</div>
<div class="t" style="left:131.80px;top:973.30px;color:#b3b3b3;"></div>
</div>
<div class="a" style="left:1398.5px;top:1053.6px;width:1.6px;height:1.4px;background:#9a9a9a"></div><div class="a" style="left:1412.6px;top:1053.6px;width:1.6px;height:1.4px;background:#9a9a9a"></div><div class="a" style="left:1485.6px;top:1053.6px;width:1.6px;height:1.4px;background:#9a9a9a"></div>
<div class="a" style="left:1721.5px;top:80px;width:16px;height:975px;background:#1e1e1e"></div>
<div class="a" style="left:1723px;top:81px;width:24px;height:335px;background:#343434;border-radius:10px"></div>
<div class="a" style="left:1258px;top:1055px;width:464px;height:1px;background:#000"></div>
<div class="a" style="left:1720px;top:1055px;width:2px;height:24px;background:#000"></div>
<svg class="a" style="left:1690px;top:1056px" width="25" height="24"><g transform="translate(-1690,-1056)"><path d="M1693.5 1059 H1711 V1077 H1701.8 V1068.8 Q1701.8 1067.2 1700.2 1067.2 H1693.5 Z" fill="#b3b3b3"/><path d="M1693.5 1068.8 H1700.3 V1076 Z" fill="#b3b3b3"/></g></svg>
<svg class="a" style="left:0;top:0" width="1737" height="1081"><line x1="1178.8" y1="147" x2="1257.5" y2="100.5" stroke="#ff0000" stroke-width="3.3" stroke-linecap="round"/><path d="M1274.5 89.5 L1246 96.3 L1257.5 100.5 L1255 112 Z" fill="#ff0000"/><line x1="1192.8" y1="443" x2="1275.8" y2="393.5" stroke="#ff0000" stroke-width="3.3" stroke-linecap="round"/><path d="M1292.5 382.8 L1264 389.4 L1275.8 393.5 L1273.5 404.8 Z" fill="#ff0000"/><line x1="1221.6" y1="496.5" x2="1303.4" y2="448.5" stroke="#ff0000" stroke-width="3.3" stroke-linecap="round"/><path d="M1320.5 438 L1292 444 L1303.4 448.5 L1301 459.8 Z" fill="#ff0000"/><line x1="1242.8" y1="755.3" x2="1327.8" y2="702.3" stroke="#ff0000" stroke-width="3.3" stroke-linecap="round"/><path d="M1344.3 691.5 L1316 698.9 L1327.8 702.3 L1325.4 714 Z" fill="#ff0000"/></svg>
</body></html>
